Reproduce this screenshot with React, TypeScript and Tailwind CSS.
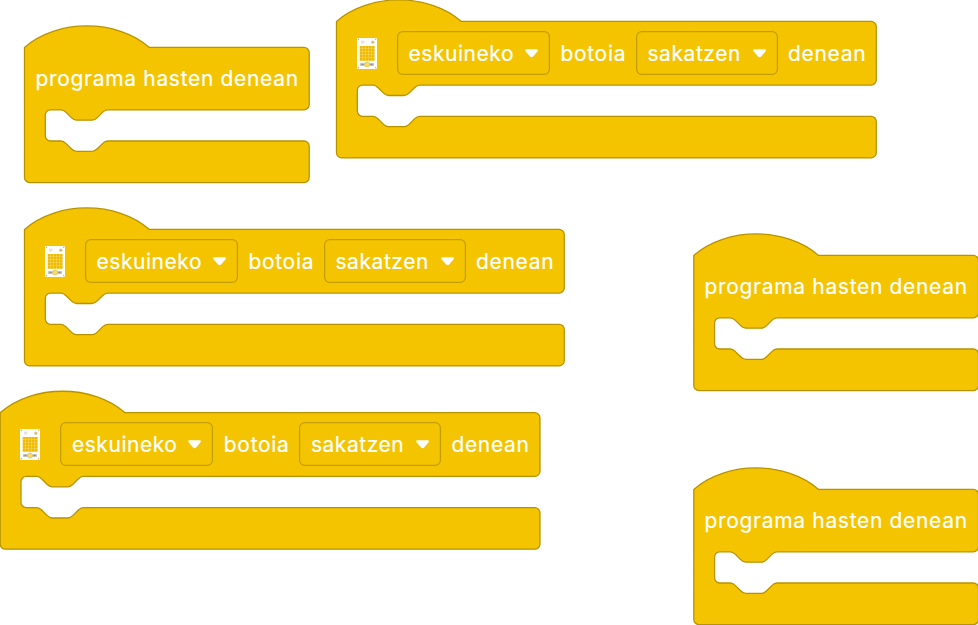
import React from "react";

const NOTCH = "c2 0 3 1 4 2l4 4c1 1 2 2 4 2h12c2 0 3 -1 4 -2l4 -4c1 -1 2 -2 4 -2";
const NOTCH_BACK = "c-2 0 -3 1 -4 2l-4 4c-1 1 -2 2 -4 2h-12c-2 0 -3 -1 -4 -2l-4 -4c-1 -1 -2 -2 -4 -2";

function hatPath(w: number, row: number) {
  return [
    "M0 0c25 -22 71 -22 96 0",
    `H${w - 4}a4 4 0 0 1 4 4V${row - 4}a4 4 0 0 1 -4 4`,
    `H64${NOTCH_BACK}h-8a4 4 0 0 0 -4 4v16a4 4 0 0 0 4 4h8${NOTCH}`,
    `H${w - 4}a4 4 0 0 1 4 4v24a4 4 0 0 1 -4 4H4a4 4 0 0 1 -4 -4z`,
  ].join("");
}

interface BlockProps {
  className: string;
  dx?: number;
  dy?: number;
}

function Shape({ width, row, dx, dy }: { width: number; row: number; dx: number; dy: number }) {
  return (
    <svg className="absolute left-0 top-0 h-px w-px overflow-visible" aria-hidden="true">
      <path
        d={hatPath(width, row)}
        transform={`translate(${dx} ${dy}) scale(1.3)`}
        fill="#f5c400"
        stroke="#b89300"
        strokeWidth="1"
      />
    </svg>
  );
}

function Arrow() {
  return (
    <svg className="mt-px h-[9px] w-[14px] shrink-0" viewBox="0 0 14 9">
      <path d="M1.6 .3h9.9c1.4 0 1.8 1.2 .9 2.1L8.1 7.6c-.9.9-2.1.9-3 0L.7 2.4C-.2 1.5.2.3 1.6.3z" fill="#fff" />
    </svg>
  );
}

function Board() {
  const lines = [0, 1, 2, 3, 4];
  return (
    <svg className="h-[31px] w-[20px] shrink-0" viewBox="0 0 20 31">
      <rect width="20" height="31" rx="1" fill="#fffefa" />
      <path d="M0.8 1.3h1.2M18 1.3h1.2M0.8 29.6h1.2M18 29.6h1.2" stroke="#b9b6a4" strokeWidth="1.2" />
      <rect x="4" y="2.6" width="3.4" height="3" fill="#e4e4e2" />
      <circle cx="15.8" cy="4.2" r="1.8" fill="#dcd09b" />
      <rect x="15.2" y="3.6" width="1.2" height="1.2" fill="#b9ac70" />
      <rect x="2.8" y="8" width="14.8" height="14.8" fill="#f8dc7c" />
      {lines.map((r) =>
        lines.map((c) => (
          <rect key={`${r}-${c}`} x={2.8 + c * 3} y={8 + r * 3} width="2.6" height="2.6" fill="#eebb00" />
        )),
      )}
      <path d="M3 26.5h14" stroke="#c2c2be" strokeWidth="2.6" />
      <path d="M4.5 26.5h2M13.5 26.5h2" stroke="#8c8c88" strokeWidth="1.6" />
      <circle cx="10" cy="26.5" r="2.6" fill="#f7d968" stroke="#cfae48" strokeWidth=".4" />
    </svg>
  );
}

function Field({ children, className }: { children: React.ReactNode; className: string }) {
  return (
    <div className={`relative flex h-[44px] shrink-0 items-center justify-between rounded-[5.5px] pl-[11.5px] pr-[11px] ${className}`}>
      <svg className="absolute inset-0 h-full w-full overflow-visible" aria-hidden="true">
        <rect x=".6" y=".6" className="h-[42.8px] w-[calc(100%-1.2px)]" rx="5.2" fill="none" stroke="#c49d00" strokeWidth="1.3" />
      </svg>
      {children}
      <Arrow />
    </div>
  );
}

function StartBlock({ className, dx = 0.5, dy = 0.4 }: BlockProps) {
  return (
    <div className={`absolute h-[135px] w-[285px] ${className}`}>
      <Shape width={219} row={48} dx={dx} dy={dy} />
      <div className="relative flex h-[63px] items-center pl-[11.5px]">
        <span className="tracking-[0.68px]">programa hasten denean</span>
      </div>
    </div>
  );
}

function ButtonBlock({ className, dx = 0.5, dy = 0.4 }: BlockProps) {
  return (
    <div className={`absolute h-[136px] w-[540px] ${className}`}>
      <Shape width={415.2} row={49} dx={dx} dy={dy} />
      <div className="relative flex h-[64px] items-center pl-[21px]">
        <Board />
        <Field className="ml-[20px] w-[153px]">
          <span className="w-[106px] tracking-[0.55px]">eskuineko</span>
        </Field>
        <span className="ml-[10.4px] w-[75.6px] shrink-0 tracking-[0.7px]">botoia</span>
        <Field className="w-[142px]">
          <span className="w-[94px] tracking-[0.55px]">sakatzen</span>
        </Field>
        <span className="ml-[10px] tracking-[0.68px]">denean</span>
      </div>
    </div>
  );
}

export default function App() {
  return (
    <main className="relative h-[625px] w-[978px] overflow-hidden bg-white font-['Inter',sans-serif] text-[21px] leading-none whitespace-nowrap text-white [-webkit-text-stroke:0.2px_#fff]">
      <StartBlock className="left-[24px] top-[47px]" />
      <ButtonBlock className="left-[336px] top-[21px]" />
      <ButtonBlock className="left-[24px] top-[229px]" />
      <StartBlock className="left-[693px] top-[255px]" dx={0.8} />
      <ButtonBlock className="left-[-0.6px] top-[412px]" dx={1.2} dy={0.7} />
      <StartBlock className="left-[693px] top-[489px]" dx={0.8} />
    </main>
  );
}
